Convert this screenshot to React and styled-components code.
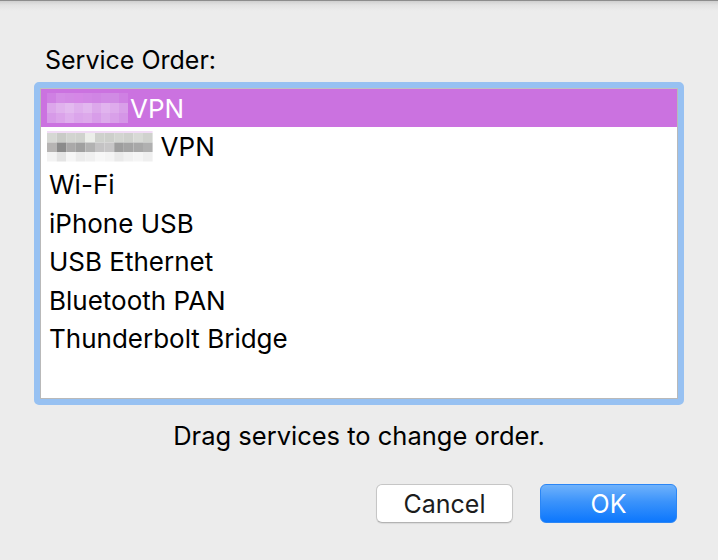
import React from "react";
import styled, { createGlobalStyle } from "styled-components";

const GlobalStyle = createGlobalStyle`
  html, body {
    margin: 0;
    padding: 0;
    background: #ececec;
  }
  body {
    font-family: "Inter", "Liberation Sans", sans-serif;
    -webkit-font-smoothing: antialiased;
  }
`;

const Sheet = styled.div`
  width: 718px;
  height: 560px;
  box-sizing: border-box;
  padding: 44px 34px 0;
  display: flex;
  flex-direction: column;
  background-color: #ececec;
  background-image: linear-gradient(
    #8c8c8c 0,
    #8c8c8c 1px,
    #cfcfcf 1px,
    #e2e2e2 5px,
    #ececec 11px
  );
  background-repeat: no-repeat;
  background-size: 100% 12px;
`;

const Label = styled.div`
  font-size: 25px;
  line-height: 32px;
  color: #000;
  padding-left: 11px;
  margin-bottom: 6px;
`;

const FocusRing = styled.div`
  border: 6px solid #97c1f2;
  border-radius: 5px;
`;

const List = styled.ul`
  list-style: none;
  margin: 0;
  padding: 0;
  height: 309px;
  background: #fff;
  border: 1px solid #b9b9b9;
  border-top-color: #c0c0c0;
`;

const Row = styled.li`
  height: 38.4px;
  display: flex;
  align-items: center;
  padding-left: 8px;
  font-size: 26px;
  color: ${(p) => (p.selected ? "#fff" : "#000")};
  background: ${(p) => (p.selected ? "#cb72e0" : "transparent")};
  white-space: pre;
`;

const Mosaic = styled.svg`
  display: block;
  flex: none;
  margin-left: -2px;
  margin-right: ${(p) => p.$gap}px;
`;

const Hint = styled.div`
  text-align: center;
  font-size: 25.5px;
  line-height: 30px;
  color: #000;
  margin-top: 16px;
`;

const Buttons = styled.div`
  display: flex;
  justify-content: flex-end;
  gap: 27px;
  padding-right: 7px;
  margin-top: 33px;
`;

const Button = styled.button`
  width: 137px;
  height: 39px;
  box-sizing: border-box;
  border-radius: 6px;
  font-family: inherit;
  font-size: 25px;
  padding: 0;
  cursor: pointer;
  ${(p) =>
    p.primary
      ? `
    color: #fff;
    border: 1px solid #2b86f5;
    background: linear-gradient(#6fb2fb, #3b93fb 45%, #0c77fd);
  `
      : `
    color: #1c1c1c;
    border: 1px solid #c6c6c6;
    border-bottom-color: #b3b3b3;
    background: #fff;
    box-shadow: 0 1px 1px rgba(0, 0, 0, 0.08);
  `}
`;

const purpleBlocks = [
  ["#cf80e3", "#d48de6", "#d38ae5", "#d587e6", "#d287e5", "#d085e4", "#d18ae5", "#d08be4", "#cf80e3"],
  ["#dca6eb", "#e0b2ed", "#e3baef", "#dfafed", "#e2b7ef", "#dca8eb", "#e1b4ee", "#deabec", "#d99fe9"],
  ["#d79ae8", "#dba3ea", "#dfaeed", "#dba5eb", "#dda9eb", "#d89de9", "#dcabeb", "#d9a0e9", "#d596e7"],
];

const greyBlocks = [
  ["#d6d8d4", "#c9cbc7", "#d2d4d0", "#d0d2ce", "#eceeea", "#cfd1cd", "#cdcfcb", "#d3d5d1", "#cfd1cd", "#d8dad6", "#d0d2ce"],
  ["#b6b4b3", "#8b8b8b", "#aaa9a9", "#a0a0a0", "#b2b2b2", "#c4c3c4", "#c7c6c7", "#9e9e9e", "#a4a4a4", "#a8a8a8", "#b0b0b0"],
  ["#f3f3f3", "#e4e4e4", "#f6f6f6", "#ececec", "#f0f0f0", "#f7f7f7", "#f4f4f4", "#eaeaea", "#f1f1f1", "#f5f5f5", "#efefef"],
];

function Pixelated({ blocks, cellW, cellH, top, gap }) {
  const cols = blocks[0].length;
  const offset = top ? 2 : 0;
  return (
    <Mosaic $gap={gap} width={cols * cellW} height={blocks.length * cellH + offset}>
      {top && <rect x="0" y="0" width={cols * cellW} height="2" fill={top} />}
      {blocks.map((row, r) =>
        row.map((c, i) => (
          <rect
            key={r + "-" + i}
            x={i * cellW}
            y={r * cellH + offset}
            width={cellW}
            height={cellH}
            fill={c}
          />
        ))
      )}
    </Mosaic>
  );
}

const services = ["Wi-Fi", "iPhone USB", "USB Ethernet", "Bluetooth PAN", "Thunderbolt Bridge"];

export default function App() {
  return (
    <>
      <GlobalStyle />
      <Sheet>
        <Label>Service Order:</Label>
        <FocusRing>
          <List>
            <Row selected>
              <Pixelated blocks={purpleBlocks} cellW={9} cellH={10} gap={2} />
              <span>VPN</span>
            </Row>
            <Row>
              <Pixelated blocks={greyBlocks} cellW={9.6} cellH={9.5} top="#f1dcf5" gap={8} />
              <span>VPN</span>
            </Row>
            {services.map((s) => (
              <Row key={s}>{s}</Row>
            ))}
          </List>
        </FocusRing>
        <Hint>Drag services to change order.</Hint>
        <Buttons>
          <Button>Cancel</Button>
          <Button primary>OK</Button>
        </Buttons>
      </Sheet>
    </>
  );
}
